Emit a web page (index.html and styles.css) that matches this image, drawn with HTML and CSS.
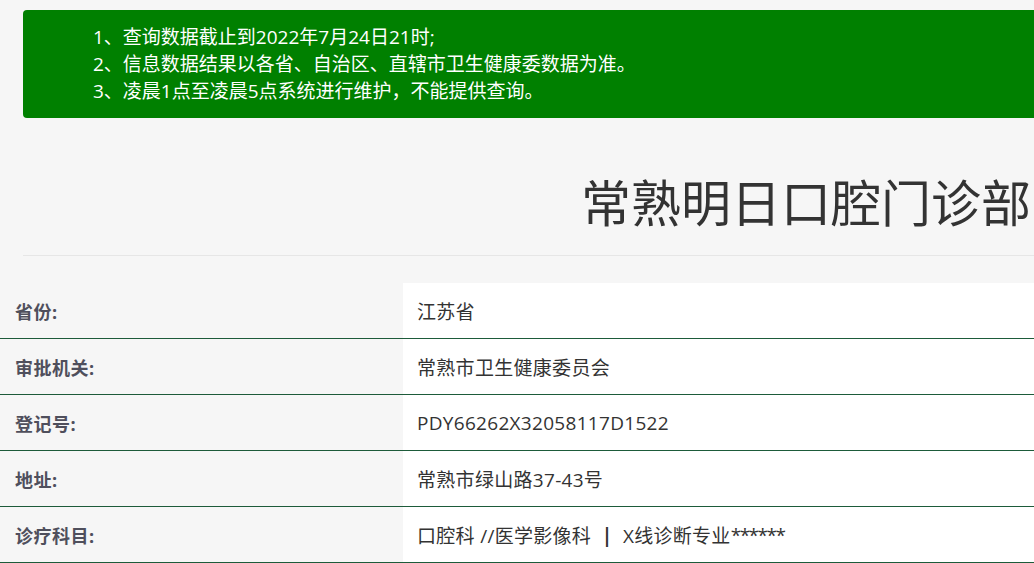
FILE: index.html
```html
<!DOCTYPE html>
<html lang="zh-CN">
<head>
<meta charset="utf-8">
<title>常熟明日口腔门诊部</title>
<link rel="stylesheet" href="styles.css">
</head>
<body>
<div class="wrap">
  <div class="notice">
    <p>1、查询数据截止到2022年7月24日21时;</p>
    <p>2、信息数据结果以各省、自治区、直辖市卫生健康委数据为准。</p>
    <p>3、凌晨1点至凌晨5点系统进行维护，不能提供查询。</p>
  </div>
  <div class="header">
    <h1 class="title">常熟明日口腔门诊部</h1>
  </div>
</div>
<div class="info">
  <div class="row"><div class="label">省份:</div><div class="value">江苏省</div></div>
  <div class="row"><div class="label">审批机关:</div><div class="value">常熟市卫生健康委员会</div></div>
  <div class="row"><div class="label">登记号:</div><div class="value">PDY66262X32058117D1522</div></div>
  <div class="row"><div class="label">地址:</div><div class="value">常熟市绿山路37-43号</div></div>
  <div class="row"><div class="label">诊疗科目:</div><div class="value">口腔科 //医学影像科 &nbsp;<b class="sep">|</b>&nbsp; X线诊断专业<span class="stars">******</span></div></div>
</div>
</body>
</html>
```
FILE: styles.css
```css
html, body {
  margin: 0;
  padding: 0;
  overflow: hidden;
}
body {
  background: #f6f6f6;
  font-family: "Open Sans", "Noto Sans CJK SC", sans-serif;
  color: #333;
  width: 1034px;
}
.wrap {
  width: 1566px;
  margin-left: 23px;
  padding-top: 10px;
}
.notice {
  background: #008000;
  color: #fff;
  border-radius: 4px;
  padding: 14px 0 13px 70px;
  font-size: 19px;
  line-height: 27px;
}
.notice p {
  margin: 0;
}
.header {
  border-bottom: 1px solid #e6e6e6;
  padding: 53px 0 20px;
}
.title {
  margin: 0;
  text-align: center;
  font-size: 50px;
  font-weight: normal;
  line-height: 64px;
  color: #333;
}
.info {
  margin-top: 27px;
}
.row {
  display: grid;
  grid-template-columns: 403px 1fr;
  height: 55px;
  border-bottom: 1px solid #1d5b3a;
}
.label {
  display: flex;
  align-items: center;
  padding-left: 15px;
  font-weight: bold;
  font-size: 18px;
  letter-spacing: 0.5px;
  color: #4f4f5c;
}
.value {
  display: flex;
  align-items: center;
  background: #fff;
  padding-left: 14px;
  font-size: 19px;
  letter-spacing: 0.3px;
  color: #333;
  white-space: pre;
}
.sep {
  font-weight: bold;
  color: #333;
}
.stars {
  letter-spacing: -1.5px;
}
```
